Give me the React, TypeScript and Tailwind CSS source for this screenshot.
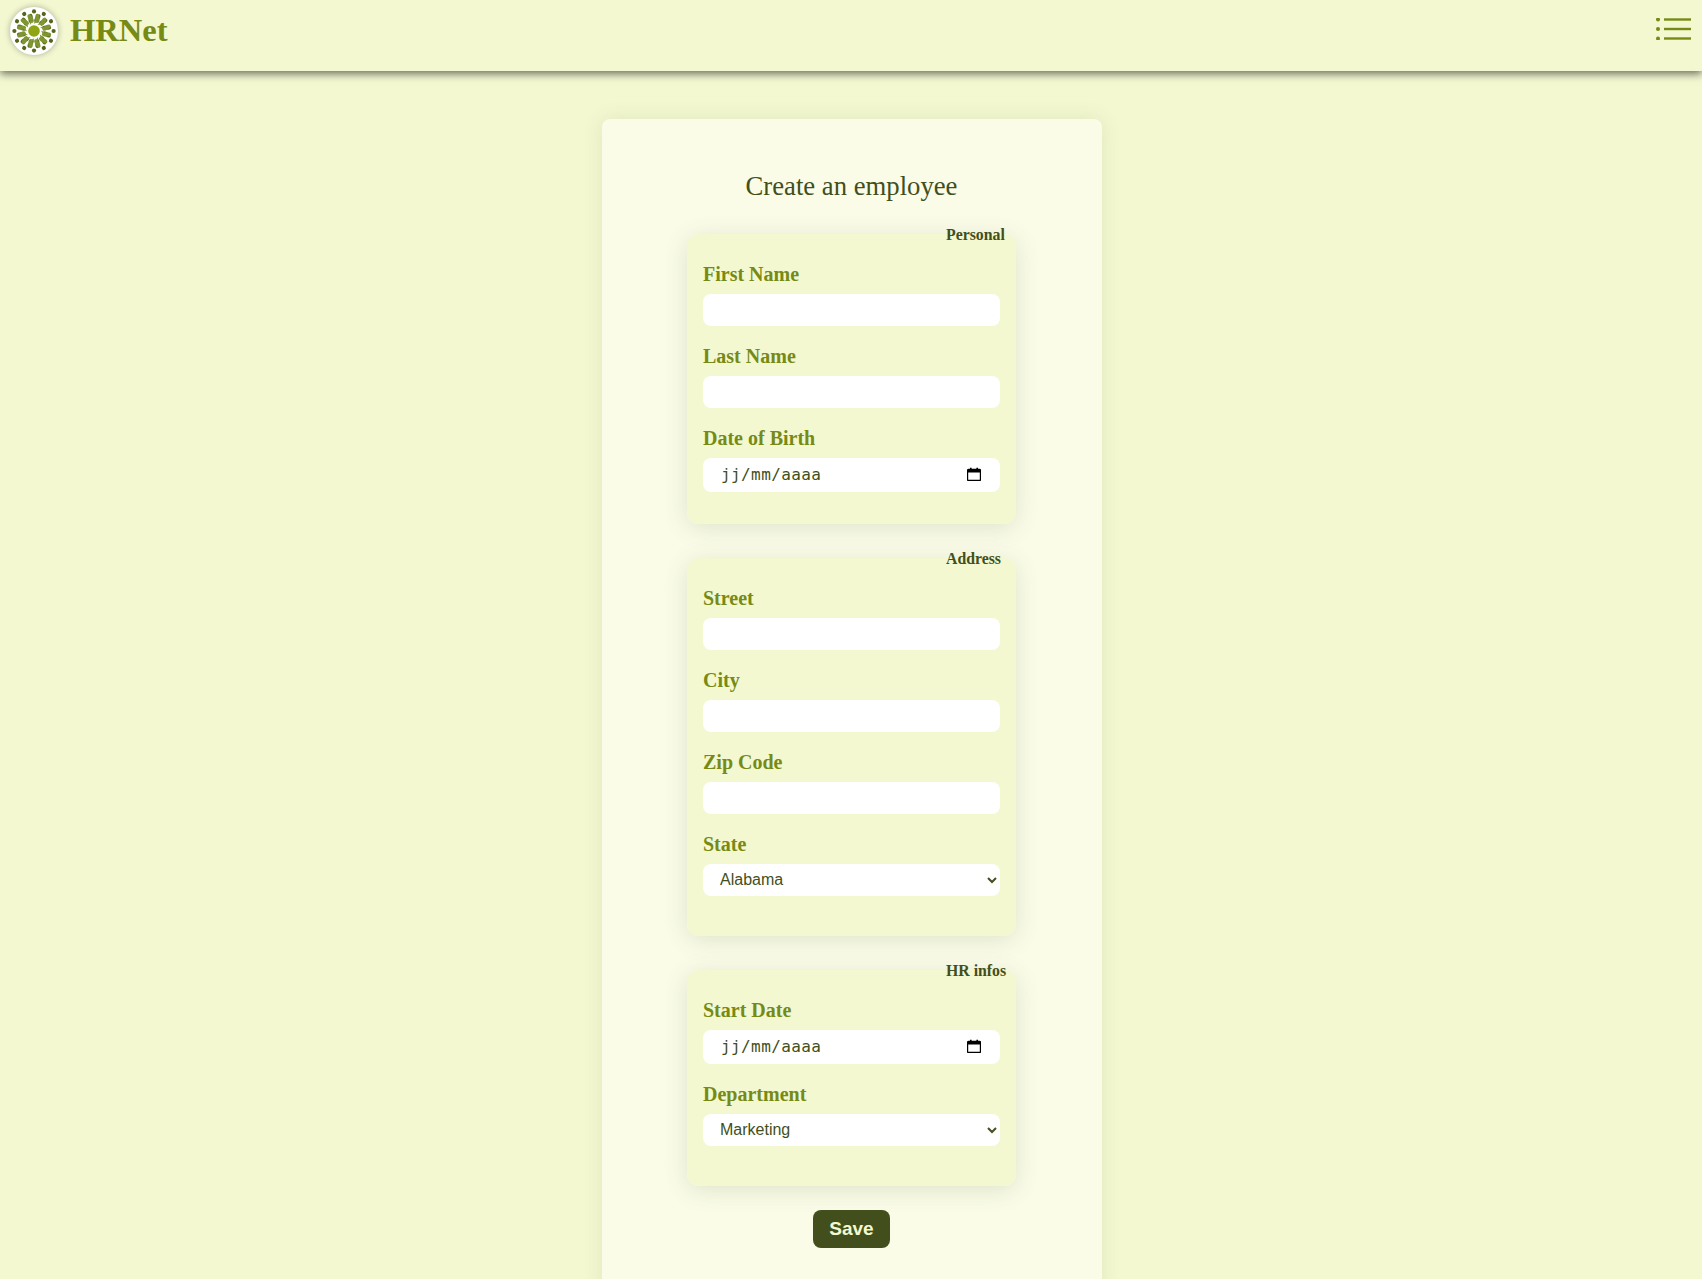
import type { ReactNode } from "react"

const serif = "font-['Liberation_Serif',serif]"

function Logo() {
  const dots = Array.from({ length: 12 }, (_, i) => i * 30)
  return (
    <svg viewBox="0 0 48 48" className="h-12 w-12 shrink-0 rounded-full bg-white shadow-[0_0_6px_rgba(0,0,0,0.3)]">
      {dots.map((a) => (
        <g key={a} transform={`rotate(${a} 24 24)`}>
          <circle cx="24" cy="4.4" r="2.1" fill="#55661c" />
          <ellipse cx="24" cy="11" rx="2.2" ry="4.6" fill="#5f7320" transform="rotate(15 24 24) rotate(16 24 11)" />
          <ellipse cx="24" cy="11" rx="2.2" ry="4.6" fill="#7f9530" transform="rotate(15 24 24) rotate(-16 24 11)" />
          <path d="M24 16.5L26.6 14" stroke="#8a9f3a" strokeWidth="1.2" fill="none" />
        </g>
      ))}
      <circle cx="24" cy="24" r="7.4" fill="#fff" />
      <circle cx="24" cy="24" r="5.8" fill="#8fa513" />
    </svg>
  )
}

function MenuIcon() {
  return (
    <svg viewBox="0 0 36 22" className="h-[22px] w-9" fill="#768a15" stroke="#768a15">
      {[1.5, 11, 20.5].map((y) => (
        <g key={y}>
          <circle cx="3" cy={y} r="2" stroke="none" />
          <path d={`M9 ${y}H36`} strokeWidth="2.4" />
        </g>
      ))}
    </svg>
  )
}

function Field({ label, children }: { label: string; children: ReactNode }) {
  return (
    <div>
      <label className={`${serif} block h-[50px] pt-[17px] text-[20px] leading-[26px] font-bold text-[#768a15]`}>{label}</label>
      {children}
    </div>
  )
}

function TextInput() {
  return <input type="text" className="block h-8 w-full rounded-lg bg-white px-4 text-[16px] text-[#424f1c] outline-none" />
}

function DateInput() {
  return (
    <div className="flex h-[34px] items-center justify-between rounded-lg bg-white pr-[19px] pl-[18px]">
      <span className="font-['DejaVu_Sans_Mono',monospace] text-[16px] tracking-[0.4px] text-[#424f1c]">jj/mm/aaaa</span>
      <svg viewBox="0 0 14 14" className="mb-[2px] h-[14px] w-[14px]">
        <path d="M1.5 2.5h11a1 1 0 0 1 1 1v9a1 1 0 0 1-1 1h-11a1 1 0 0 1-1-1v-9a1 1 0 0 1 1-1z" fill="none" stroke="#000" strokeWidth="1.4" />
        <path d="M.5 3h13v2.5H.5zM3 .8h1.6v2H3zM9.4 .8H11v2H9.4z" fill="#000" />
      </svg>
    </div>
  )
}

function Select({ options }: { options: string[] }) {
  return (
    <select className="block h-8 w-full rounded-lg bg-white pb-[2px] pl-[13px] font-['Liberation_Sans',sans-serif] text-[16px] text-[#424f1c] outline-none">
      {options.map((o) => (
        <option key={o}>{o}</option>
      ))}
    </select>
  )
}

function Section({ legend, children, className }: { legend: string; children: ReactNode; className?: string }) {
  return (
    <fieldset className={`w-[329px] min-w-0 rounded-xl bg-[#f3f8d1] px-4 shadow-[0_4px_24px_rgba(66,79,28,0.14)] ${className || ""}`}>
      <legend className={`${serif} ml-[243px] h-5 w-[70px] text-[15.8px] leading-[22px] font-bold whitespace-nowrap text-[#424f1c]`}>{legend}</legend>
      {children}
    </fieldset>
  )
}

export default function App() {
  return (
    <div className="h-screen overflow-hidden bg-[#f3f8d1]">
      <header className="flex h-[71px] items-start justify-between bg-[#f3f8d1] pt-[7px] pr-[11px] pl-[10px] shadow-[0_3px_8px_rgba(0,0,0,0.55)]">
        <div className="flex items-center gap-3">
          <Logo />
          <span className={`${serif} mb-[2px] text-[32.5px] leading-[44px] font-bold text-[#768a15]`}>HRNet</span>
        </div>
        <div className="pt-[11px]">
          <MenuIcon />
        </div>
      </header>

      <main className="flex justify-center pt-12 pl-px">
        <div className="flex w-[500px] flex-col items-center rounded-lg bg-[#fafce8] pt-[51px] pb-16 shadow-[0_0_20px_rgba(66,79,28,0.1)]">
          <h1 className={`${serif} mb-[22px] h-8 text-[26.7px] leading-8 text-[#424f1c]`}>Create an employee</h1>

          <Section legend="Personal" className="pb-8">
            <Field label="First Name"><TextInput /></Field>
            <Field label="Last Name"><TextInput /></Field>
            <Field label="Date of Birth"><DateInput /></Field>
          </Section>

          <Section legend="Address" className="mt-6 pb-10">
            <Field label="Street"><TextInput /></Field>
            <Field label="City"><TextInput /></Field>
            <Field label="Zip Code"><TextInput /></Field>
            <Field label="State"><Select options={["Alabama", "Alaska", "Arizona"]} /></Field>
          </Section>

          <Section legend="HR infos" className="mt-6 pb-10">
            <Field label="Start Date"><DateInput /></Field>
            <Field label="Department"><Select options={["Marketing", "Sales", "Engineering"]} /></Field>
          </Section>

          <button type="button" className="mt-6 h-[38px] w-[77px] shrink-0 rounded-lg bg-[#424f1c] font-['Liberation_Sans',sans-serif] text-[19px] font-bold text-[#f3f8d1]">
            Save
          </button>
        </div>
      </main>
    </div>
  )
}
